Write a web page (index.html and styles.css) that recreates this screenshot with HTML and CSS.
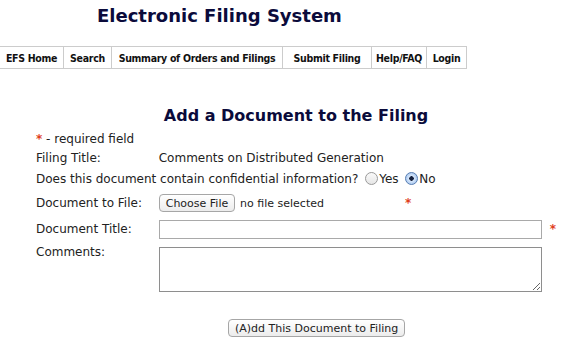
FILE: index.html
```html
<!DOCTYPE html>
<html>
<head>
<title>Electronic Filing System</title>
<link rel="stylesheet" href="styles.css">
</head>
<body>

<div class="header">Electronic Filing System</div>

<table class="nav">
<tr>
    <td><a href="#">EFS Home</a></td>
    <td><a href="#">Search</a></td>
    <td><a href="#">Summary of Orders and Filings</a></td>
    <td><a href="#">Submit Filing</a></td>
    <td><a href="#">Help/FAQ</a></td>
    <td><a href="#">Login</a></td>
</tr>
</table>

<div class="content">
    <h2>Add a Document to the Filing</h2>

    <table class="form">
    <tr class="r-req">
        <td colspan="3"><span class="req">*</span> - required field</td>
    </tr>
    <tr class="r-title">
        <td class="label">Filing Title:</td>
        <td colspan="2">Comments on Distributed Generation</td>
    </tr>
    <tr class="r-conf">
        <td colspan="3">Does this document contain confidential information?
            <label class="radio"><input type="radio" name="conf" value="yes" />Yes</label> <label class="radio"><input type="radio" name="conf" value="no" checked />No</label>
        </td>
    </tr>
    <tr class="r-file">
        <td class="label">Document to File:</td>
        <td><button type="button" class="btn">Choose File</button> <span class="nofile">no file selected</span><span class="req file-req">*</span></td>
        <td></td>
    </tr>
    <tr class="r-doc">
        <td class="label">Document Title:</td>
        <td><input type="text" id="title" name="title" class="wide" /></td>
        <td class="req-cell"><span class="req">*</span></td>
    </tr>
    <tr class="r-comm">
        <td class="label top">Comments:</td>
        <td><textarea id="comments" name="comments" class="wide" rows="3"></textarea></td>
        <td></td>
    </tr>
    </table>

    <div class="submit">
        <button type="button" class="btn">(A)dd This Document to Filing</button>
    </div>
</div>

</body>
</html>
```

FILE: styles.css
```css
body {
    margin: 0;
    font-family: "DejaVu Sans", Verdana, sans-serif;
    font-size: 12px;
    color: #222;
    background: #fff;
}

.header {
    font-size: 18px;
    line-height: 22px;
    font-weight: bold;
    color: #0b0b3b;
    padding: 5px 0 0 97px;
    height: 46px;
    box-sizing: border-box;
}

.nav {
    border-collapse: collapse;
    margin: 0 0 0 -1px;
}

.nav td {
    border: 1px solid #cccccc;
    padding: 0;
    height: 21px;
    text-align: center;
    white-space: nowrap;
    font-family: "DejaVu Sans Condensed", "DejaVu Sans", sans-serif;
    font-size: 10.5px;
    letter-spacing: -0.3px;
    font-weight: bold;
}

.nav td:nth-child(1) { width: 63px; }
.nav td:nth-child(2) { width: 47px; }
.nav td:nth-child(3) { width: 170px; }
.nav td:nth-child(4) { width: 88px; }
.nav td:nth-child(5) { width: 54px; }
.nav td:nth-child(6) { width: 39px; }

.nav a {
    color: #111;
    text-decoration: none;
}

.content {
    width: 520px;
    margin: 0 0 0 36px;
}

h2 {
    text-align: center;
    font-size: 16px;
    line-height: 20px;
    color: #0b0b3b;
    margin: 37px 0 3px 0;
}

.form {
    border-collapse: collapse;
    width: 520px;
}

.form td {
    padding: 0;
    vertical-align: middle;
    white-space: nowrap;
}

.form td.label {
    width: 123px;
}

.r-req td, .r-title td {
    height: 19px;
}

.r-conf td, .r-file td {
    height: 24px;
}

.r-doc td {
    height: 28px;
}

.form td.top {
    vertical-align: top;
    padding-top: 2px;
}

.req {
    color: #e0401c;
    font-weight: bold;
}

.nofile {
    font-size: 11px;
    margin-left: 1px;
}

.file-req {
    margin-left: 81px;
}

.req-cell {
    padding-left: 8px !important;
}

.radio input {
    appearance: none;
    -webkit-appearance: none;
    width: 13px;
    height: 13px;
    margin: 0 1px 0 3px;
    border: 1px solid #9a9a9a;
    border-radius: 50%;
    background: linear-gradient(#fafafa, #e6e6e6);
    vertical-align: -2px;
    box-sizing: border-box;
}

.radio input:checked {
    border-color: #5a7fb3;
    background: radial-gradient(circle, #16223f 0, #16223f 2px, #d9e8fb 2.5px, #a9c8ef 6px);
}

.wide {
    display: block;
    width: 383px;
    box-sizing: border-box;
    font-family: "DejaVu Sans", sans-serif;
    font-size: 12px;
    border: 1px solid #a9a9a9;
}

input.wide {
    height: 19px;
}

textarea.wide {
    height: 45px;
    margin: 4px 0 4px 0;
    border-color: #8e8e8e;
}

.btn {
    font-family: "DejaVu Sans", sans-serif;
    font-size: 11px;
    color: #222;
    height: 18px;
    padding: 0 6px;
    border: 1px solid #a6a6a6;
    border-radius: 4px;
    background: linear-gradient(#ffffff, #ececec);
}

.submit {
    margin: 23px 0 0 192px;
}
```
